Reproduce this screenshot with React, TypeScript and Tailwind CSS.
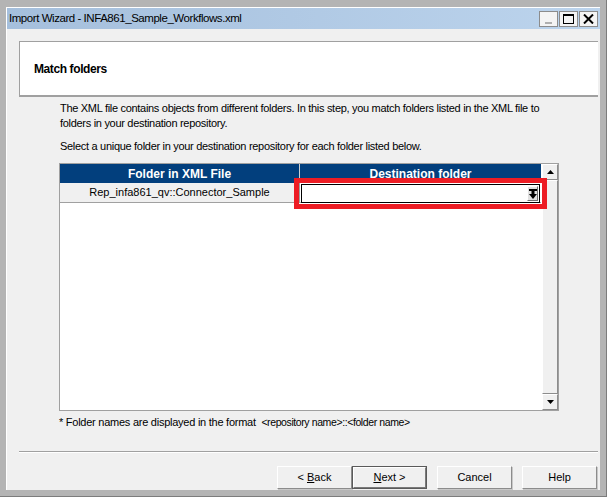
import React from "react"

const font = { fontFamily: '"Liberation Sans", Arial, sans-serif' }

function ClassicButton({ children, isDefault }: { children: React.ReactNode; isDefault?: boolean }) {
  if (isDefault) {
    return (
      <div className="w-[75px] h-[23px] border border-[#5a5a5a]">
        <div className="w-full h-full border-t border-l border-white border-r border-b border-r-[#7a7a7a] border-b-[#7a7a7a] bg-[#f0f0f0] flex items-center justify-center text-[11px] text-black">
          <span className="whitespace-pre">{children}</span>
        </div>
      </div>
    )
  }
  return (
    <div className="w-[75px] h-[23px] border-t border-l border-white border-r border-b border-r-[#8c8c8c] border-b-[#8c8c8c] shadow-[1px_1px_0_#c8c8c8] bg-[#f0f0f0] flex items-center justify-center text-[11px] text-black">
      <span className="whitespace-pre">{children}</span>
    </div>
  )
}

function TitleButton({ children, disabled }: { children: React.ReactNode; disabled?: boolean }) {
  return (
    <div className={"w-[19px] h-[16px] border border-[#8c8c8c] bg-[#f4f4f4] flex items-center justify-center " + (disabled ? "text-[#a0a0a0]" : "text-black")}>
      {children}
    </div>
  )
}

function ScrollArrow({ up }: { up?: boolean }) {
  return (
    <div className="w-[16px] h-[16px] bg-[#f0f0f0] border-t border-l border-white border-r border-b border-r-[#8c8c8c] border-b-[#8c8c8c] flex items-center justify-center">
      <svg width="7" height="4" viewBox="0 0 7 4">
        {up ? <polygon points="0,4 7,4 3.5,0" fill="#000" /> : <polygon points="0,0 7,0 3.5,4" fill="#000" />}
      </svg>
    </div>
  )
}

export default function App() {
  return (
    <div style={font} className="w-[607px] h-[497px] bg-[#b4b4b4] border-r border-b border-[#7c7c7c] flex flex-col pl-[6px] pt-[7px] pr-[6px] pb-[6px] overflow-hidden">
      <div className="flex flex-col flex-1 min-h-0 border-t border-l border-white">
        {/* title bar */}
        <div className="h-[21px] shrink-0 bg-gradient-to-r from-[#a5bfdc] to-[#bcd4ed] flex items-center justify-between pl-[2px] pr-[2px]">
          <span className="text-[11.5px] text-black tracking-[-0.45px]">Import Wizard - INFA861_Sample_Workflows.xml</span>
          <div className="flex gap-[1px]">
            <TitleButton disabled>
              <div className="w-[7px] h-[2px] bg-[#b0b0b0] mt-[8px]" />
            </TitleButton>
            <TitleButton>
              <div className="w-[11px] h-[10px] border-black border-t-2 border-l border-r border-b" />
            </TitleButton>
            <TitleButton>
              <svg width="11" height="10" viewBox="0 0 11 10">
                <path d="M1 0.5 L10 9.5 M10 0.5 L1 9.5" stroke="#000" strokeWidth="2" />
              </svg>
            </TitleButton>
          </div>
        </div>

        {/* content */}
        <div className="flex-1 min-h-0 overflow-hidden bg-[#f0f0f0] flex flex-col pl-[12px] pr-[2px] pt-[12px]">
          <div className="h-[56px] shrink-0 bg-white border-t border-l border-[#a0a0a0] border-b-2 border-b-[#a0a0a0] flex items-center pl-[14px]">
            <span className="text-[12px] font-bold text-black tracking-[-0.4px]">Match folders</span>
          </div>

          <div className="pl-[41px] pt-[4px] text-[11px] text-black leading-[15px] tracking-[-0.3px]">
            <p>The XML file contains objects from different folders. In this step, you match folders listed in the XML file to<br />folders in your destination repository.</p>
            <p className="mt-[8px]">Select a unique folder in your destination repository for each folder listed below.</p>
          </div>

          {/* table */}
          <div className="ml-[40px] mt-[9px] w-[500px] h-[248px] shrink-0 border border-[#a0a0a0] bg-white flex relative">
            <div className="flex flex-col w-[481px]">
              <div className="flex h-[19px] bg-[#023f7d] text-white text-[12px] font-bold">
                <div className="w-[240px] flex items-center justify-center border-r border-[#d0d0d0]">Folder in XML File</div>
                <div className="flex-1 flex items-center justify-center">Destination folder</div>
              </div>
              <div className="flex h-[20px] border-b border-[#a0a0a0]">
                <div className="w-[240px] bg-[#f0f0f0] border-r border-[#a0a0a0] flex items-center justify-center text-[11px] text-black">Rep_infa861_qv::Connector_Sample</div>
                <div className="flex-1 p-[1px] pb-0">
                  <div className="h-[19px] w-[239px] bg-white border border-black flex justify-end items-center pr-[1px]">
                    <div className="w-[11px] h-[15px] bg-[#e0e0e0] border-t border-l border-white border-r border-b border-r-[#707070] border-b-[#707070] flex items-center justify-center">
                      <svg width="8" height="10" viewBox="0 0 8 10">
                        <rect x="0" y="0" width="8" height="2" fill="#000" />
                        <rect x="2.5" y="2" width="3" height="3" fill="#000" />
                        <polygon points="0,5 8,5 4,10" fill="#000" />
                      </svg>
                    </div>
                  </div>
                </div>
              </div>
            </div>
            {/* scrollbar */}
            <div className="w-[17px] flex flex-col ml-[1px] bg-[#f0f0f0]">
              <ScrollArrow up />
              <div className="flex-1 border-t border-l border-white border-r border-b border-r-[#8c8c8c] border-b-[#8c8c8c] bg-[#f0f0f0]" />
              <ScrollArrow />
            </div>
            {/* red highlight */}
            <div className="absolute left-[234px] top-[14px] w-[253px] h-[31px] border-[5px] border-[#ed1c24]" />
          </div>

          <p className="ml-[40px] mt-[4px] leading-[15px] text-[11px] text-black whitespace-pre tracking-[-0.25px]">* Folder names are displayed in the format  <span className="tracking-[-0.4px] text-[10.5px]">&lt;repository name&gt;::&lt;folder name&gt;</span></p>

          <div className="mt-[21px] h-[2px] shrink-0 border-t border-[#a0a0a0] border-b border-b-white" />

          <div className="flex justify-end mt-[13px] pr-[1px]">
            <ClassicButton>&lt; <span className="underline">B</span>ack</ClassicButton>
            <ClassicButton isDefault><span className="underline">N</span>ext &gt;</ClassicButton>
            <div className="w-[10px]" />
            <ClassicButton>Cancel</ClassicButton>
            <div className="w-[10px]" />
            <ClassicButton>Help</ClassicButton>
          </div>
        </div>
      </div>
    </div>
  )
}
